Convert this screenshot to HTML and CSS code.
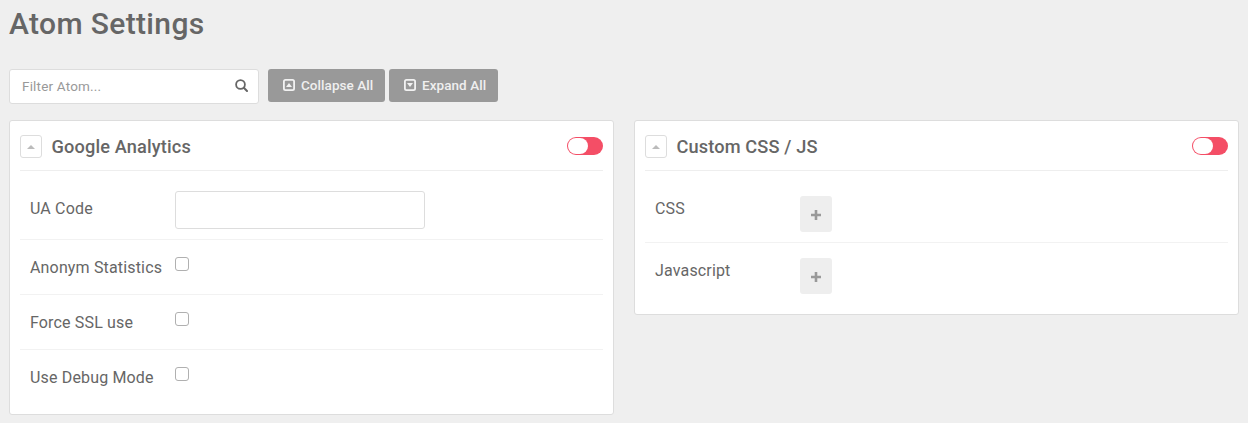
FILE: index.html
```html
<!DOCTYPE html>
<html lang="en">
<head>
<meta charset="utf-8">
<title>Atom Settings</title>
<link rel="stylesheet" href="styles.css">
</head>
<body>
<h1 class="page-title">Atom Settings</h1>
<div class="toolbar">
  <label class="search">
    <span class="placeholder">Filter Atom...</span>
    <svg class="search-icon" width="13" height="13" viewBox="0 0 13 13"><circle cx="5.5" cy="5.5" r="4.4" fill="none" stroke="#666" stroke-width="1.8"/><path d="M8.8 8.8L12 12" stroke="#666" stroke-width="2" stroke-linecap="round"/></svg>
  </label>
  <button class="btn"><svg width="12" height="12" viewBox="0 0 12 12"><rect x=".9" y=".9" width="10.2" height="10.2" rx="1.6" fill="none" stroke="#f2f2f2" stroke-width="1.8"/><path d="M3 8L6 4L9 8Z" fill="#f2f2f2"/></svg><span>Collapse All</span></button>
  <button class="btn btn-expand"><svg width="12" height="12" viewBox="0 0 12 12"><rect x=".9" y=".9" width="10.2" height="10.2" rx="1.6" fill="none" stroke="#f2f2f2" stroke-width="1.8"/><path d="M3 4L6 8L9 4Z" fill="#f2f2f2"/></svg><span>Expand All</span></button>
</div>
<div class="cards">
  <section class="card">
    <header class="card-head">
      <span class="fold"><svg width="8" height="4" viewBox="0 0 8 4"><path d="M0 4L4 0L8 4Z" fill="#bbb"/></svg></span>
      <h2>Google Analytics</h2>
      <span class="toggle"><span class="knob"></span></span>
    </header>
    <div class="row row-input"><span class="label">UA Code</span><input class="field" type="text" aria-label="UA Code"></div>
    <div class="row"><span class="label">Anonym Statistics</span><span class="check"></span></div>
    <div class="row"><span class="label">Force SSL use</span><span class="check"></span></div>
    <div class="row row-last"><span class="label">Use Debug Mode</span><span class="check"></span></div>
  </section>
  <section class="card">
    <header class="card-head">
      <span class="fold"><svg width="8" height="4" viewBox="0 0 8 4"><path d="M0 4L4 0L8 4Z" fill="#bbb"/></svg></span>
      <h2>Custom CSS / JS</h2>
      <span class="toggle"><span class="knob"></span></span>
    </header>
    <div class="row row-add-first"><span class="label">CSS</span><span class="add"><svg width="10" height="10" viewBox="0 0 10 10"><path d="M5 0V10M0 5H10" stroke="#999" stroke-width="2.6"/></svg></span></div>
    <div class="row row-add-last"><span class="label">Javascript</span><span class="add"><svg width="10" height="10" viewBox="0 0 10 10"><path d="M5 0V10M0 5H10" stroke="#999" stroke-width="2.6"/></svg></span></div>
  </section>
</div>
</body>
</html>
```

FILE: styles.css
```css
* { box-sizing: border-box; }
body {
  margin: 0;
  padding: 0 9px;
  height: 423px;
  overflow: hidden;
  background: #efefef;
  color: #666;
  font: 16px/24px Roboto, sans-serif;
}
.page-title { margin: 0; height: 69px; padding-top: 4px; font-size: 30px; line-height: 40px; font-weight: 500; letter-spacing: .36px; }
.toolbar { display: flex; align-items: flex-start; height: 51px; }
.search {
  display: flex;
  align-items: center;
  justify-content: space-between;
  width: 250px;
  height: 35px;
  margin-right: 9px;
  padding: 0 10px 0 12px;
  background: #fff;
  border: 1px solid #ddd;
  border-radius: 3px;
}
.search-icon { margin-bottom: 2px; }
.placeholder { color: #999; font-size: 13.5px; letter-spacing: .18px; padding-bottom: 1px; }
.btn {
  display: flex;
  align-items: center;
  gap: 6px;
  width: 117px;
  height: 33px;
  margin: 0 4px 0 0;
  padding: 0 0 1px 15px;
  border: 0;
  border-radius: 3px;
  background: #999;
  color: #efefef;
  font: 500 13.5px/20px Roboto, sans-serif;
  letter-spacing: .06px;
  white-space: nowrap;
}
.btn-expand { width: 109px; }
.cards { display: flex; align-items: flex-start; gap: 20px; }
.card {
  width: 605px;
  padding: 0 10px;
  background: #fff;
  border: 1px solid #ddd;
  border-radius: 3px;
}
.card-head { display: flex; align-items: center; height: 50px; border-bottom: 1px solid #eee; }
.fold {
  display: flex;
  align-items: center;
  justify-content: center;
  width: 22px;
  height: 23px;
  margin: 2px 9.5px 0 0;
  padding-top: 1px;
  border: 1px solid #ddd;
  border-radius: 3px;
}
.card-head h2 { margin: 2px 0 0; flex: 1; font-size: 18.2px; line-height: 24px; font-weight: 500; letter-spacing: .14px; }
.toggle { width: 36px; height: 18px; padding: 1px; border-radius: 9px; background: #f44e66; }
.knob { display: block; width: 20px; height: 16px; border-radius: 8px; background: #fff; }
.row { display: flex; align-items: flex-start; height: 55px; padding: 15px 10px 0; border-bottom: 1px solid #f2f2f2; }
.label { width: 145px; padding-top: 1px; letter-spacing: .16px; white-space: nowrap; }
.row-input { height: 69px; padding-top: 20px; }
.row-input .label { padding-top: 6px; }
.field { width: 250px; height: 38px; margin: 0; border: 1px solid #ddd; border-radius: 3px; background: #fff; }
.check { width: 14px; height: 14px; margin-top: 2px; border: 1px solid #b0b0b0; border-radius: 3px; }
.row-last { height: 64px; border-bottom: 0; }
.row-add-first { height: 72px; padding-top: 25px; }
.row-add-first .label { padding-top: 1px; }
.row-add-last { height: 71px; border-bottom: 0; }
.add { display: flex; align-items: center; justify-content: center; width: 32px; height: 36px; padding-top: 2px; border-radius: 3px; background: #eee; }
```
